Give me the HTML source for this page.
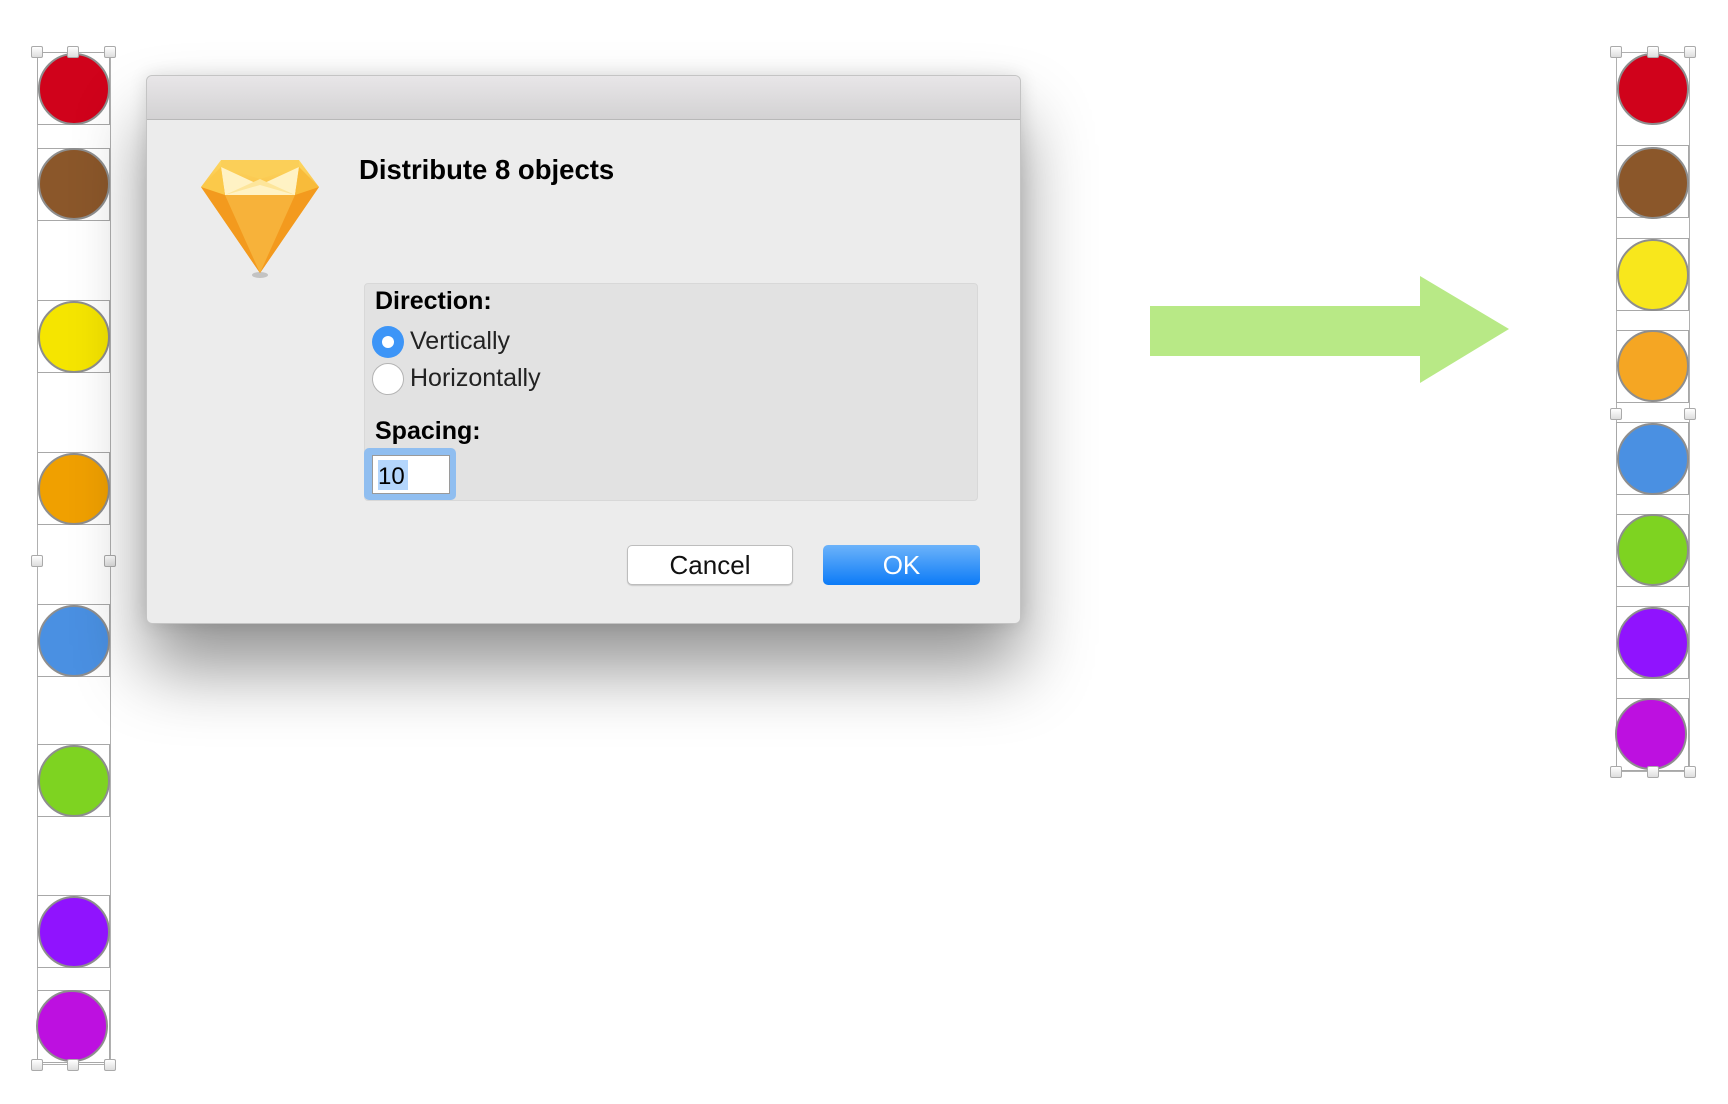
<!DOCTYPE html>
<html><head><meta charset="utf-8"><style>
*{margin:0;padding:0;box-sizing:border-box}
body{width:1728px;height:1104px;background:#fff;position:relative;overflow:hidden;font-family:"Liberation Sans",sans-serif}
.a{position:absolute}
.c{position:absolute;border-radius:50%;border:2px solid #8e8e8e;width:72px;height:72px}
.bb{position:absolute;border:1px solid #a8a8a8;width:73px;height:73px}
.h{position:absolute;width:12px;height:12px;background:linear-gradient(#fff,#ddd);border:1px solid #aaa;border-radius:2px;margin:-6px 0 0 -6px}
.line{position:absolute;border:1px solid #b0b0b0}
</style></head><body>

<!-- left column -->
<div class="line" style="left:37px;top:52px;width:74px;height:1013px"></div>
<div class="bb" style="left:37px;top:52px"></div>
<div class="c" style="left:38px;top:53px;background:#d0021b"></div>
<div class="bb" style="left:37px;top:148px"></div>
<div class="c" style="left:38px;top:148px;background:#8b572a"></div>
<div class="bb" style="left:37px;top:300px"></div>
<div class="c" style="left:38px;top:301px;background:#f5e500"></div>
<div class="bb" style="left:37px;top:452px"></div>
<div class="c" style="left:38px;top:453px;background:#f0a000"></div>
<div class="bb" style="left:37px;top:604px"></div>
<div class="c" style="left:38px;top:605px;background:#4a90e2"></div>
<div class="bb" style="left:37px;top:744px"></div>
<div class="c" style="left:38px;top:745px;background:#7ed321"></div>
<div class="bb" style="left:37px;top:895px"></div>
<div class="c" style="left:38px;top:896px;background:#9013fe"></div>
<div class="bb" style="left:37px;top:990px"></div>
<div class="c" style="left:36px;top:990px;background:#bd10e0"></div>
<div class="h" style="left:37px;top:52px"></div><div class="h" style="left:73px;top:52px"></div><div class="h" style="left:110px;top:52px"></div>
<div class="h" style="left:37px;top:561px"></div><div class="h" style="left:110px;top:561px"></div>
<div class="h" style="left:37px;top:1065px"></div><div class="h" style="left:73px;top:1065px"></div><div class="h" style="left:110px;top:1065px"></div>

<!-- right column -->
<div class="line" style="left:1616px;top:52px;width:74px;height:720px"></div>
<div class="c" style="left:1617px;top:53px;background:#d0021b"></div>
<div class="bb" style="left:1616px;top:145px"></div>
<div class="c" style="left:1617px;top:147px;background:#8b572a"></div>
<div class="bb" style="left:1616px;top:238px"></div>
<div class="c" style="left:1617px;top:239px;background:#f8e71c"></div>
<div class="bb" style="left:1616px;top:330px"></div>
<div class="c" style="left:1617px;top:330px;background:#f5a623"></div>
<div class="bb" style="left:1616px;top:422px"></div>
<div class="c" style="left:1617px;top:423px;background:#4a90e2"></div>
<div class="bb" style="left:1616px;top:514px"></div>
<div class="c" style="left:1617px;top:514px;background:#7ed321"></div>
<div class="bb" style="left:1616px;top:606px"></div>
<div class="c" style="left:1617px;top:607px;background:#9013fe"></div>
<div class="bb" style="left:1616px;top:698px"></div>
<div class="c" style="left:1615px;top:698px;background:#bd10e0"></div>
<div class="h" style="left:1616px;top:52px"></div><div class="h" style="left:1653px;top:52px"></div><div class="h" style="left:1690px;top:52px"></div>
<div class="h" style="left:1616px;top:414px"></div><div class="h" style="left:1690px;top:414px"></div>
<div class="h" style="left:1616px;top:772px"></div><div class="h" style="left:1653px;top:772px"></div><div class="h" style="left:1690px;top:772px"></div>

<!-- arrow -->
<svg class="a" style="left:0;top:0" width="1728" height="1104"><polygon points="1150,306 1420,306 1420,276 1509,329 1420,383 1420,356 1150,356" fill="#b8e986"/></svg>

<!-- dialog -->
<div class="a" style="left:146px;top:75px;width:875px;height:549px;background:#ececec;border:1px solid #c4c4c4;border-radius:6px;box-shadow:0 45px 70px rgba(0,0,0,.42),0 0 18px rgba(0,0,0,.12)">
  <div class="a" style="left:0;top:0;width:873px;height:44px;background:linear-gradient(#e8e6e8,#d3d2d3);border-bottom:1px solid #b8b8b8;border-radius:6px 6px 0 0"></div>
</div>
<svg class="a" style="left:195px;top:155px" width="130" height="125" viewBox="0 0 130 125">
  <defs><linearGradient id="g" x1="0" y1="0" x2="0" y2="1"><stop offset="0" stop-color="#fdd760"/><stop offset="1" stop-color="#f08a10"/></linearGradient></defs>
  <ellipse cx="65" cy="120" rx="8" ry="3" fill="#999" opacity=".5"/>
  <polygon points="26,5 104,5 124,32 65,118 6,32" fill="url(#g)"/>
  <polygon points="6,32 124,32 65,118" fill="#f39a1e"/>
  <polygon points="30,40 100,40 65,118" fill="#f7b23a"/>
  <polygon points="26,12 65,30 104,12 100,40 30,40" fill="#fff2c4"/>
  <polygon points="30,40 65,24 100,40 65,30" fill="#fde59a"/>
  <polygon points="26,5 104,5 104,12 65,24 26,12" fill="#fbcf58"/>
  <polygon points="6,32 26,12 30,40" fill="#fbc94a"/>
  <polygon points="124,32 104,12 100,40" fill="#f8bb3a"/>
</svg>
<div class="a" style="left:359px;top:154px;font-size:27.5px;font-weight:bold;color:#000">Distribute 8 objects</div>

<div class="a" style="left:364px;top:283px;width:614px;height:218px;background:#e2e2e2;border:1px solid #d8d8d8;border-radius:4px"></div>
<div class="a" style="left:375px;top:287px;font-size:25px;font-weight:bold;color:#000">Direction:</div>
<div class="a" style="left:372px;top:326px;width:32px;height:32px;border-radius:50%;background:#3d95f7"></div>
<div class="a" style="left:382px;top:336px;width:12px;height:12px;border-radius:50%;background:#fff"></div>
<div class="a" style="left:410px;top:327px;font-size:25px;color:#222">Vertically</div>
<div class="a" style="left:372px;top:363px;width:32px;height:32px;border-radius:50%;background:#fff;border:1px solid #b4b4b4"></div>
<div class="a" style="left:410px;top:364px;font-size:25px;color:#222">Horizontally</div>
<div class="a" style="left:375px;top:417px;font-size:25px;font-weight:bold;color:#000">Spacing:</div>
<div class="a" style="left:364px;top:448px;width:92px;height:52px;background:#90bef0;border-radius:5px"></div>
<div class="a" style="left:372px;top:455px;width:78px;height:39px;background:#fff;border:1px solid #9a9a9a"></div>
<div class="a" style="left:378px;top:460px;height:30px;width:30px;background:#b4d6fc"></div>
<div class="a" style="left:378px;top:463px;font-size:24px;color:#000">10</div>

<div class="a" style="left:627px;top:545px;width:166px;height:40px;background:#fff;border:1px solid #bdbdbd;border-radius:5px;box-shadow:0 1px 1px rgba(0,0,0,.15);text-align:center;line-height:38px;font-size:26px;color:#111">Cancel</div>
<div class="a" style="left:823px;top:545px;width:157px;height:40px;background:linear-gradient(#6cb3fa,#0c7bf7);border-radius:5px;text-align:center;line-height:40px;font-size:26px;color:#fff">OK</div>
</body></html>
